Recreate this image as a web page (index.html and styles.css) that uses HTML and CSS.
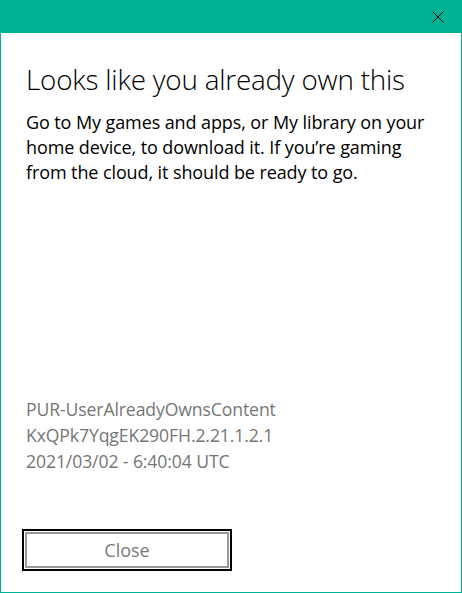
FILE: index.html
```html
<!DOCTYPE html>
<html lang="en">
<head>
<meta charset="utf-8">
<title>Looks like you already own this</title>
<link rel="stylesheet" href="styles.css">
</head>
<body>
<div class="window">
  <div class="titlebar">
    <button class="x-btn" aria-label="Close">
      <svg width="12" height="12" viewBox="0 0 12 12"><path d="M0.5 0.5 L11.5 11.5 M11.5 0.5 L0.5 11.5" stroke="#000" stroke-width="1" fill="none"/></svg>
    </button>
  </div>
  <div class="content">
    <h1 class="title">Looks like you already own this</h1>
    <p class="message">Go to My games and apps, or My library on your home device, to download it. If you’re gaming from the cloud, it should be ready to go.</p>
    <div class="spacer"></div>
    <div class="details">
      <div>PUR-UserAlreadyOwnsContent</div>
      <div>KxQPk7YqgEK290FH.2.21.1.2.1</div>
      <div>2021/03/02 - 6:40:04 UTC</div>
    </div>
    <div class="actions">
      <button class="close-btn"><span class="inner">Close</span></button>
    </div>
  </div>
</div>
</body>
</html>
```
FILE: styles.css
```css
html, body {
  margin: 0;
  padding: 0;
  background: #fff;
}
body {
  font-family: "Open Sans", "Noto Sans", sans-serif;
  color: #000;
}
.window {
  width: 462px;
  height: 593px;
  box-sizing: border-box;
  display: flex;
  flex-direction: column;
}
.titlebar {
  height: 33px;
  background: #00b294;
  display: flex;
  justify-content: flex-end;
  align-items: flex-start;
  flex: none;
}
.x-btn {
  border: 0;
  background: transparent;
  padding: 0;
  margin: 11px 18px 0 0;
  width: 12px;
  height: 12px;
  display: block;
}
.x-btn svg { display: block; }
.content {
  flex: 1;
  border: 1px solid #00b294;
  border-top: 0;
  padding: 0 25px;
  display: flex;
  flex-direction: column;
}
.title {
  margin: 28px 0 0 0;
  font-weight: 300;
  font-size: 27.8px;
  line-height: 36px;
  letter-spacing: -0.2px;
}
.message {
  margin: 13px 0 0 0;
  font-size: 18px;
  line-height: 25px;
  letter-spacing: -0.1px;
}
.spacer { flex: 1; }
.details {
  color: #767676;
  font-size: 17.6px;
  line-height: 26px;
  letter-spacing: -0.1px;
}
.actions {
  margin: 55px 0 21px -4px;
}
.close-btn {
  width: 210px;
  height: 42px;
  border: 2px solid #000;
  padding: 1px;
  background: #fff;
  box-sizing: border-box;
  display: block;
  font-family: inherit;
}
.close-btn .inner {
  display: flex;
  align-items: center;
  justify-content: center;
  height: 100%;
  box-sizing: border-box;
  border: 2px solid #999;
  color: #7a7a7a;
  font-size: 18px;
}
```
